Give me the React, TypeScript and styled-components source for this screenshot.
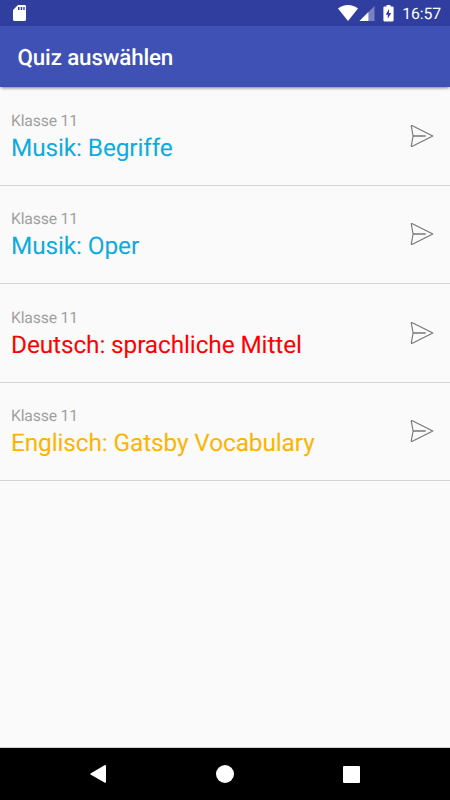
import React from "react";
import styled, { createGlobalStyle } from "styled-components";

const GlobalStyle = createGlobalStyle`
  * { box-sizing: border-box; }
  body {
    margin: 0;
    background: #fafafa;
    font-family: Roboto, "Liberation Sans", sans-serif;
    text-rendering: geometricPrecision;
  }
  svg { display: block; flex: none; }
`;

const Screen = styled.div`
  display: flex;
  flex-direction: column;
  width: 450px;
  height: 800px;
  overflow: hidden;
  background: #fafafa;
`;

const StatusBar = styled.div`
  display: flex;
  align-items: center;
  justify-content: space-between;
  flex: none;
  height: 26px;
  padding: 0 9px 0 13px;
  background: #303f9f;
`;

const StatusIcons = styled.div`
  display: flex;
  align-items: center;
`;

const Clock = styled.time`
  margin-left: 7.5px;
  font-size: 15.8px;
  letter-spacing: -0.1px;
  line-height: 26px;
  padding-top: 2px;
  color: #fff;
`;

const AppBar = styled.header`
  display: flex;
  align-items: center;
  flex: none;
  height: 61.4px;
  padding: 3px 17.5px 0;
  background: #3f51b5;
  box-shadow: 0 2px 3px -1px rgba(0, 0, 0, 0.5);
`;

const Title = styled.h1`
  margin: 0;
  font-size: 22.4px;
  font-weight: 500;
  letter-spacing: -0.15px;
  line-height: 28px;
  color: #fff;
`;

const QuizList = styled.ul`
  flex: 1;
  margin: 0;
  padding: 0;
  list-style: none;
`;

const QuizRow = styled.li`
  display: flex;
  align-items: center;
  justify-content: space-between;
  height: 98.4px;
  padding: 0 16px 0 11px;
  border-bottom: 1.4px solid #d4d4d4;
`;

const QuizText = styled.div`
  display: flex;
  flex-direction: column;
  padding-top: 2px;
`;

const Grade = styled.span`
  font-size: 15.7px;
  letter-spacing: -0.15px;
  line-height: 22px;
  color: #a0a0a0;
`;

const QuizName = styled.span<{ $color: string }>`
  font-size: 24.4px;
  letter-spacing: -0.11px;
  line-height: 32px;
  color: ${(p) => p.$color};
`;

const NavBar = styled.nav`
  display: grid;
  grid-template-columns: repeat(3, 126.5px);
  justify-content: center;
  justify-items: center;
  align-items: center;
  flex: none;
  height: 52px;
  background: #000;
  box-shadow: 0 -0.5px 0 #aaa;
`;

const quizzes = [
  { grade: "Klasse 11", name: "Musik: Begriffe", color: "#0cabe0" },
  { grade: "Klasse 11", name: "Musik: Oper", color: "#0cabe0" },
  { grade: "Klasse 11", name: "Deutsch: sprachliche Mittel", color: "#ff0000" },
  { grade: "Klasse 11", name: "Englisch: Gatsby Vocabulary", color: "#ffb300" },
];

const SdCardIcon = () => (
  <svg width="14" height="16" viewBox="0 0 14 16">
    <path fill="#fff" fillRule="evenodd" d="M5 0H11.6Q13 0 13 1.4V14.4Q13 16 11.6 16H1.6Q0 16 0 14.4V5ZM5 2V5H6.5V2ZM7.7 2V5H9.2V2ZM10.3 2V5H11.7V2Z" />
  </svg>
);

const WifiIcon = () => (
  <svg width="20" height="16" viewBox="0 0 20 16">
    <path fill="#fff" d="M10 16L0 3.6Q4.2 0 10 0T20 3.6Z" />
  </svg>
);

const SignalIcon = () => (
  <svg width="17" height="16" viewBox="0 0 17 16">
    <path fill="#fff" fillOpacity=".35" d="M1.5 16L16.5 1V16Z" />
    <path fill="#fff" d="M1.5 16L10.4 7.1V16Z" />
  </svg>
);

const BatteryIcon = () => (
  <svg width="20" height="17" viewBox="0 0 20 17">
    <path fill="#fff" fillRule="evenodd" d="M11.5 0H15.5V1.6H17.5Q18.6 1.6 18.6 2.7V15.3Q18.6 16.4 17.5 16.4H9.5Q8.4 16.4 8.4 15.3V2.7Q8.4 1.6 9.5 1.6H11.5ZM14 4.1L10.7 9.7H12.8V13.8L16.2 8H14Z" />
  </svg>
);

const SendIcon = () => (
  <svg width="24" height="24" viewBox="0 0 24 24" fill="none" stroke="#777" strokeLinejoin="round" strokeLinecap="round">
    <path strokeWidth="1.15" d="M1.9 1.5L22.8 12L1.9 22.5Q1.2 22.5 1.3 21.8L3.1 12L1.3 2.2Q1.2 1.5 1.9 1.5Z" />
    <path strokeWidth="1.5" strokeLinecap="butt" d="M3 12H15.7" />
  </svg>
);

const BackIcon = () => (
  <svg width="18" height="18" viewBox="0 0 18 18">
    <path fill="#fff" d="M14.9 0Q16 0 16 1V17Q16 18 14.9 17.7L0.5 9.6Q0 9 0.5 8.4Z" />
  </svg>
);

const HomeIcon = () => (
  <svg width="18" height="18" viewBox="0 0 18 18">
    <circle cx="9" cy="9" r="9" fill="#fff" />
  </svg>
);

const RecentsIcon = () => (
  <svg width="17" height="17" viewBox="0 0 17 17">
    <rect width="17" height="17" rx="1" fill="#fff" />
  </svg>
);

export default function App() {
  return (
    <Screen>
      <GlobalStyle />
      <StatusBar>
        <SdCardIcon />
        <StatusIcons>
          <WifiIcon />
          <SignalIcon />
          <BatteryIcon />
          <Clock>16:57</Clock>
        </StatusIcons>
      </StatusBar>
      <AppBar>
        <Title>Quiz auswählen</Title>
      </AppBar>
      <QuizList>
        {quizzes.map((quiz) => (
          <QuizRow key={quiz.name}>
            <QuizText>
              <Grade>{quiz.grade}</Grade>
              <QuizName $color={quiz.color}>{quiz.name}</QuizName>
            </QuizText>
            <SendIcon />
          </QuizRow>
        ))}
      </QuizList>
      <NavBar>
        <BackIcon />
        <HomeIcon />
        <RecentsIcon />
      </NavBar>
    </Screen>
  );
}
